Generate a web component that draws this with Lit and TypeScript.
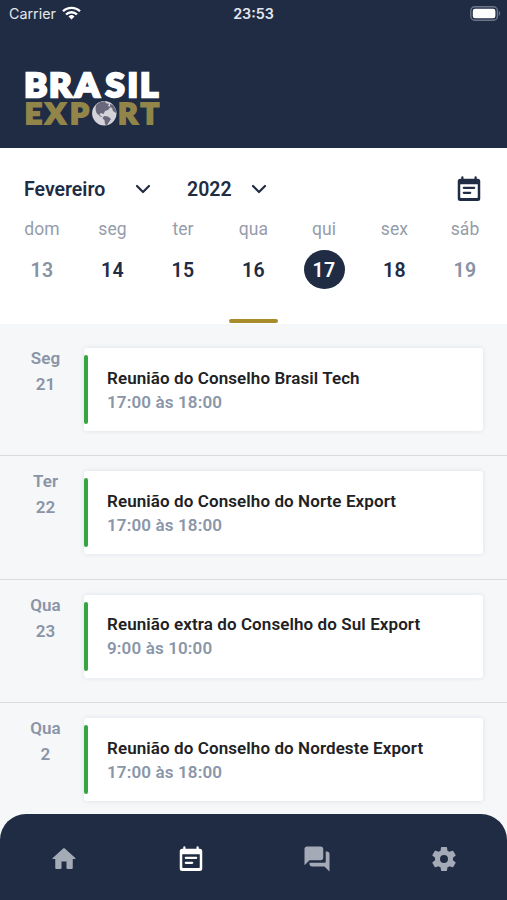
import { LitElement, html, css, svg } from "lit";
import { customElement } from "lit/decorators.js";
import { classMap } from "lit/directives/class-map.js";

const NOTE = "M19 3.7h-.8V2.6a.9.9 0 0 0-1.8 0v1.1H7.600V2.600a.9.9 0 0 0-1.800 0v1.100H5a2 2 0 0 0-2 2V19.500a2 2 0 0 0 2 2h14a2 2 0 0 0 2-2V5.700a2 2 0 0 0-2-2zM19 18.600a.6.6 0 0 1-.6.6H5.600a.6.6 0 0 1-.6-.6V8.200h14zM7.800 10.200h8.400a.85.85 0 0 1 0 1.700H7.800a.85.85 0 0 1 0-1.700zM7.800 14.200h5.200a.85.85 0 0 1 0 1.700H7.800a.85.85 0 0 1 0-1.700z";
const HOME = "M10 19v-5h4v5c0 .55.45 1 1 1h3c.55 0 1-.45 1-1v-7h1.7c.46 0 .68-.57.33-.87L12.67 3.600c-.38-.34-.96-.34-1.340 0l-8.360 7.530c-.34.3-.13.87.33.87H5v7c0 .55.45 1 1 1h3c.55 0 1-.45 1-1z";
const FORUM = "M20 6h-1v8c0 .55-.45 1-1 1H6v1c0 1.100.9 2 2 2h10l4 4V8c0-1.100-.9-2-2-2zm-3 5V4c0-1.100-.9-2-2-2H4c-1.100 0-2 .9-2 2v13l4-4h9c1.100 0 2-.9 2-2z";
const GEAR = "M19.140 12.940c.04-.3.06-.61.06-.94 0-.32-.02-.64-.07-.94l2.030-1.580c.18-.14.23-.41.12-.61l-1.920-3.320c-.12-.22-.37-.29-.59-.22l-2.390.96c-.5-.38-1.030-.7-1.620-.94l-.36-2.540c-.04-.24-.24-.41-.48-.41h-3.840c-.24 0-.43.17-.47.41l-.36 2.540c-.59.24-1.130.57-1.620.94l-2.390-.96c-.22-.08-.47 0-.59.22L2.740 8.870c-.12.21-.08.47.12.61l2.030 1.580c-.05.3-.09.63-.09.94s.02.64.07.94l-2.030 1.580c-.18.14-.23.41-.12.61l1.920 3.320c.12.22.37.29.59.22l2.390-.96c.5.38 1.030.7 1.620.94l.36 2.540c.05.24.24.41.48.41h3.840c.24 0 .44-.17.47-.41l.36-2.540c.59-.24 1.130-.56 1.620-.94l2.390.96c.22.08.47 0 .59-.22l1.920-3.320c.12-.22.07-.47-.12-.61l-2.010-1.580zM12 15.200a3.200 3.200 0 1 1 0-6.400 3.200 3.200 0 0 1 0 6.400z";

const icon = (d: string) => html`<svg class="icon" viewBox="0 0 24 24">${svg`<path fill="currentColor" fill-rule="evenodd" d=${d}></path>`}</svg>`;
const chevron = html`<svg class="chevron" viewBox="0 0 16 10"><path d="M2 2l6 6 6-6" fill="none" stroke="currentColor" stroke-width="2.200" stroke-linecap="round" stroke-linejoin="round"></path></svg>`;

const DAYS = [
  { name: "dom", day: 13, muted: true },
  { name: "seg", day: 14 },
  { name: "ter", day: 15 },
  { name: "qua", day: 16 },
  { name: "qui", day: 17, selected: true },
  { name: "sex", day: 18 },
  { name: "sáb", day: 19, muted: true },
];

const EVENTS = [
  { name: "Seg", day: 21, title: "Reunião do Conselho Brasil Tech", time: "17:00 às 18:00" },
  { name: "Ter", day: 22, title: "Reunião do Conselho do Norte Export", time: "17:00 às 18:00" },
  { name: "Qua", day: 23, title: "Reunião extra do Conselho do Sul Export", time: "9:00 às 10:00" },
  { name: "Qua", day: 2, title: "Reunião do Conselho do Nordeste Export", time: "17:00 às 18:00" },
];

@customElement("app-header")
class AppHeader extends LitElement {
  static styles = css`
    :host { display: block; height: 147.500px; background: #202c44; color: #fff; box-sizing: border-box; }
    .status { height: 28px; display: grid; grid-template-columns: 1fr auto 1fr; align-items: center; padding: 0 6px 0 9px; font: 400 14.300px/28px Inter, sans-serif; color: #e3e7ed; }
    .carrier { display: flex; align-items: center; gap: 6px; }
    .wifi { width: 19px; height: 14px; margin-top: -2px; }
    .clock { font-weight: 600; margin-left: -3px; }
    .battery { justify-self: end; width: 31px; height: 15px; margin-top: -2px; }
    .logo { display: block; width: 150px; height: 66px; margin: 38px 0 0 20px; overflow: visible; }
    .word { font-family: Lato, sans-serif; font-weight: 900; stroke-linejoin: miter; }
    .white { fill: #fff; stroke: #fff; stroke-width: 2.600; }
    .gold { fill: #92854a; stroke: #92854a; stroke-width: 2; }
  `;
  render() {
    return html`
      <div class="status">
        <div class="carrier">Carrier
          <svg class="wifi" viewBox="0 0 19 14"><g fill="none" stroke="#fff" stroke-width="2.300"><path d="M1 5.300a12.200 12.200 0 0 1 17 0"></path><path d="M4 8.500a7.800 7.800 0 0 1 11 0"></path></g><path d="M9.500 13.500l-3-3a4.300 4.300 0 0 1 6 0z" fill="#fff"></path></svg>
        </div>
        <div class="clock">23:53</div>
        <svg class="battery" viewBox="0 0 31 15"><rect x=".8" y=".8" width="26.600" height="13.400" rx="4" fill="none" stroke="#6d7689" stroke-width="1.400"></rect><rect x="2.800" y="2.800" width="22.600" height="9.400" rx="2.200" fill="#fff"></rect><path d="M28.800 5a3 3 0 0 1 0 5z" fill="#6d7689"></path></svg>
      </div>
      <svg class="logo" viewBox="20 66 150 66">
        <text class="word white" font-size="33" transform="translate(0 97) scale(1.050 1)" x="23 46.800 71.400 100.600 121.400 133.300">BRASIL</text>
        <text class="word gold" font-size="28.500" transform="translate(0 124) scale(1.060 1)" x="23.400 42.600 66">EXP</text>
        <text class="word gold" font-size="28.500" transform="translate(0 124) scale(1.060 1)" x="111.300 132.800">RT</text>
        <circle cx="104.300" cy="113.300" r="12.200" fill="#d5d2da"></circle>
        <path d="M96 105l4-3 5-.7 1 2 3 .5-1 2.200 2.500 1-2.500 3-3 1-1.500 3-3-1-1 2 3 2-2-.2-4-3.800-1-4zM110 104l3 1 3 5v3l-3-2-1-3-2-1zM104 116l4 .5 3 2.500-2 3-2 3.200-2-1-.5-4-2-2z" fill="#69677c"></path>
      </svg>`;
  }
}

@customElement("week-picker")
class WeekPicker extends LitElement {
  static styles = css`
    :host { display: block; height: 176px; background: #fff; color: #202c44; font-family: Roboto, sans-serif; box-sizing: border-box; padding-top: 25px; }
    .bar { display: flex; align-items: center; height: 32px; padding: 0 23px 0 24px; }
    .select { display: flex; align-items: center; justify-content: space-between; font-size: 19.500px; line-height: 24px; font-weight: 600; }
    .select span { padding-top: 2px; }
    .month { width: 127px; margin-right: 36px; }
    .year { width: 80px; }
    .chevron { width: 16px; height: 10px; }
    .icon { width: 30px; height: 30px; margin-left: auto; }
    .week { display: grid; grid-template-columns: repeat(7, 70.500px); margin-left: 6.750px; }
    .cell { display: flex; flex-direction: column; align-items: center; }
    .name { font-size: 17.500px; line-height: 24px; margin-top: 12px; color: #959cab; letter-spacing: .1px; }
    .day { width: 41px; height: 39px; margin-top: 9px; border-radius: 50%; line-height: 41.500px; text-align: center; font-size: 19.500px; font-weight: 600; letter-spacing: .3px; }
    .muted { color: #8792a3; }
    .selected { background: #202c44; color: #fff; }
    .handle { width: 49px; height: 4px; margin: 30px auto 0; border-radius: 2px; background: #a88c2b; }
  `;
  render() {
    return html`
      <div class="bar">
        <div class="select month"><span>Fevereiro</span>${chevron}</div>
        <div class="select year"><span>2022</span>${chevron}</div>
        ${icon(NOTE)}
      </div>
      <div class="week">
        ${DAYS.map((d) => html`<div class="cell"><div class="name">${d.name}</div><div class=${classMap({ day: true, muted: !!d.muted, selected: !!d.selected })}>${d.day}</div></div>`)}
      </div>
      <div class="handle"></div>`;
  }
}

@customElement("event-list")
class EventList extends LitElement {
  static styles = css`
    :host { display: block; padding-top: 9.500px; font-family: Roboto, sans-serif; font-weight: 600; }
    .row { display: flex; box-sizing: border-box; height: 123.400px; padding: 15px 24px 0 0; border-bottom: 1px solid #d9dce0; }
    .date { width: 91px; margin-right: -7px; flex: none; text-align: center; color: #8a94a6; font-size: 17px; line-height: 26px; letter-spacing: .1px; }
    .date div:first-child { margin-top: -3px; }
    .card { flex: 1; display: flex; align-items: center; height: 83px; box-sizing: border-box; border-radius: 3px; background: #fff; box-shadow: 0 0 5px rgba(32, 44, 68, .1); }
    .mark { width: 4px; height: 69px; border-radius: 2px; background: #36a541; margin-right: 19px; }
    .title { margin-top: 1px; font-size: 17px; line-height: 24px; color: #212124; letter-spacing: .09px; }
    .time { font-size: 17px; line-height: 25px; color: #8a96a8; letter-spacing: .13px; }
  `;
  render() {
    return EVENTS.map((e) => html`
      <div class="row">
        <div class="date"><div>${e.name}</div><div>${e.day}</div></div>
        <div class="card"><div class="mark"></div><div><div class="title">${e.title}</div><div class="time">${e.time}</div></div></div>
      </div>`);
  }
}

@customElement("tab-bar")
class TabBar extends LitElement {
  static styles = css`
    :host { display: grid; grid-template-columns: repeat(4, 1fr); height: 86px; box-sizing: border-box; padding: 8px 0 4px 1px; background: #202c44; border-radius: 26px 26px 0 0; color: #a4abb7; }
    .tab { display: flex; justify-content: center; padding-top: 22px; }
    .icon { width: 30px; height: 30px; }
    .active { color: #fff; }
  `;
  render() {
    return [HOME, NOTE, FORUM, GEAR].map((d, i) => html`<div class=${classMap({ tab: true, active: i === 1 })}>${icon(d)}</div>`);
  }
}

@customElement("app-root")
class AppRoot extends LitElement {
  static styles = css`
    :host { display: flex; flex-direction: column; height: 900px; overflow: hidden; background: #f5f7f9; }
    .header, .picker, .tabs { flex: none; }
    .events { flex: 1; min-height: 0; overflow: hidden; }
  `;
  render() {
    return html`
      <app-header class="header"></app-header>
      <week-picker class="picker"></week-picker>
      <event-list class="events"></event-list>
      <tab-bar class="tabs"></tab-bar>`;
  }
}
